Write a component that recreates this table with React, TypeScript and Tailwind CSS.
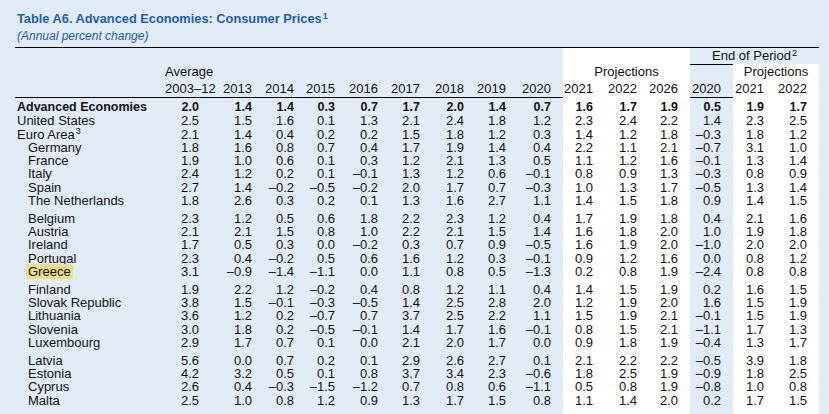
import React from "react";

const GRID =
  "grid grid-cols-[150px_57px_42px_42px_41px_43px_42px_44px_42px_45px_42px_44px_41px_43px_43px_43px]";

const WHITE = new Set([9, 10, 11, 13, 14]);

type Row = {
  name: string;
  sup?: string;
  v: string[];
  bold?: boolean;
  indent?: boolean;
  top?: "first" | "group";
  hl?: boolean;
};

const d = (s: string) => s.split(" ").map((x) => x.replace("-", "\u2013"));

const rows: Row[] = [
  { name: "Advanced Economies", bold: true, top: "first", v: d("2.0 1.4 1.4 0.3 0.7 1.7 2.0 1.4 0.7 1.6 1.7 1.9 0.5 1.9 1.7") },
  { name: "United States", v: d("2.5 1.5 1.6 0.1 1.3 2.1 2.4 1.8 1.2 2.3 2.4 2.2 1.4 2.3 2.5") },
  { name: "Euro Area", sup: "3", v: d("2.1 1.4 0.4 0.2 0.2 1.5 1.8 1.2 0.3 1.4 1.2 1.8 -0.3 1.8 1.2") },
  { name: "Germany", indent: true, v: d("1.8 1.6 0.8 0.7 0.4 1.7 1.9 1.4 0.4 2.2 1.1 2.1 -0.7 3.1 1.0") },
  { name: "France", indent: true, v: d("1.9 1.0 0.6 0.1 0.3 1.2 2.1 1.3 0.5 1.1 1.2 1.6 -0.1 1.3 1.4") },
  { name: "Italy", indent: true, v: d("2.4 1.2 0.2 0.1 -0.1 1.3 1.2 0.6 -0.1 0.8 0.9 1.3 -0.3 0.8 0.9") },
  { name: "Spain", indent: true, v: d("2.7 1.4 -0.2 -0.5 -0.2 2.0 1.7 0.7 -0.3 1.0 1.3 1.7 -0.5 1.3 1.4") },
  { name: "The Netherlands", indent: true, v: d("1.8 2.6 0.3 0.2 0.1 1.3 1.6 2.7 1.1 1.4 1.5 1.8 0.9 1.4 1.5") },
  { name: "Belgium", indent: true, top: "group", v: d("2.3 1.2 0.5 0.6 1.8 2.2 2.3 1.2 0.4 1.7 1.9 1.8 0.4 2.1 1.6") },
  { name: "Austria", indent: true, v: d("2.1 2.1 1.5 0.8 1.0 2.2 2.1 1.5 1.4 1.6 1.8 2.0 1.0 1.9 1.8") },
  { name: "Ireland", indent: true, v: d("1.7 0.5 0.3 0.0 -0.2 0.3 0.7 0.9 -0.5 1.6 1.9 2.0 -1.0 2.0 2.0") },
  { name: "Portugal", indent: true, v: d("2.3 0.4 -0.2 0.5 0.6 1.6 1.2 0.3 -0.1 0.9 1.2 1.6 0.0 0.8 1.2") },
  { name: "Greece", indent: true, hl: true, v: d("3.1 -0.9 -1.4 -1.1 0.0 1.1 0.8 0.5 -1.3 0.2 0.8 1.9 -2.4 0.8 0.8") },
  { name: "Finland", indent: true, top: "group", v: d("1.9 2.2 1.2 -0.2 0.4 0.8 1.2 1.1 0.4 1.4 1.5 1.9 0.2 1.6 1.5") },
  { name: "Slovak Republic", indent: true, v: d("3.8 1.5 -0.1 -0.3 -0.5 1.4 2.5 2.8 2.0 1.2 1.9 2.0 1.6 1.5 1.9") },
  { name: "Lithuania", indent: true, v: d("3.6 1.2 0.2 -0.7 0.7 3.7 2.5 2.2 1.1 1.5 1.9 2.1 -0.1 1.5 1.9") },
  { name: "Slovenia", indent: true, v: d("3.0 1.8 0.2 -0.5 -0.1 1.4 1.7 1.6 -0.1 0.8 1.5 2.1 -1.1 1.7 1.3") },
  { name: "Luxembourg", indent: true, v: d("2.9 1.7 0.7 0.1 0.0 2.1 2.0 1.7 0.0 0.9 1.8 1.9 -0.4 1.3 1.7") },
  { name: "Latvia", indent: true, top: "group", v: d("5.6 0.0 0.7 0.2 0.1 2.9 2.6 2.7 0.1 2.1 2.2 2.2 -0.5 3.9 1.8") },
  { name: "Estonia", indent: true, v: d("4.2 3.2 0.5 0.1 0.8 3.7 3.4 2.3 -0.6 1.8 2.5 1.9 -0.9 1.8 2.5") },
  { name: "Cyprus", indent: true, v: d("2.6 0.4 -0.3 -1.5 -1.2 0.7 0.8 0.6 -1.1 0.5 0.8 1.9 -0.8 1.0 0.8") },
  { name: "Malta", indent: true, v: d("2.5 1.0 0.8 1.2 0.9 1.3 1.7 1.5 0.8 1.1 1.4 2.0 0.2 1.7 1.5") },
];

const years = ["2013", "2014", "2015", "2016", "2017", "2018", "2019", "2020", "2021", "2022", "2026", "2020", "2021", "2022"];

function DataRow({ r }: { r: Row }) {
  const padTop = r.top === "first" ? "pt-[3px]" : r.top === "group" ? "pt-[4.8px]" : "";
  return (
    <div className={`${GRID} ${r.bold ? "font-bold text-[12.5px]" : "text-[13px]"}`}>
      <div className={`${padTop} ${r.indent ? "pl-[13px]" : "pl-[2px]"} whitespace-nowrap`}>
        {r.hl ? (
          <span className="bg-[#ebde8c] rounded-[3px] px-[2px] -mx-[2px]">{r.name}</span>
        ) : (
          r.name
        )}
        {r.sup && <sup className="text-[9px] ml-[1px]">{r.sup}</sup>}
      </div>
      {r.v.map((x, i) => (
        <div
          key={i}
          className={`${padTop} text-right ${i === 0 ? "pr-[23px]" : "pr-[12px]"} ${WHITE.has(i) ? "bg-white" : ""}`}
        >
          {x}
        </div>
      ))}
    </div>
  );
}

export default function App() {
  return (
    <div
      className="w-[829px] h-[414px] overflow-hidden bg-[#e2ecf6] text-[#111] flex flex-col pl-[15px]"
      style={{ fontFamily: "'Liberation Sans Narrow', 'Arial Narrow', 'Liberation Sans', sans-serif" }}
    >
      <div className="pt-[11px] pl-[2px]">
        <div className="h-[16px] text-[12.8px] leading-[16px] font-bold text-[#1f5ea6] whitespace-nowrap">
          Table A6. Advanced Economies: Consumer Prices
          <sup className="text-[9px] ml-[1px]">1</sup>
        </div>
        <div className="h-[15px] mt-[2px] text-[12px] leading-[15px] italic text-[#1f5ea6]">(Annual percent change)</div>
      </div>
      <div className="mt-[3px] w-[804px] flex-1 flex flex-col text-[13px] leading-[13.25px] border-t border-black">
        {/* Header row A */}
        <div className={`${GRID} h-[16px]`}>
          <div className="col-span-10" />
          <div className="bg-white" />
          <div className="bg-white" />
          <div className="bg-white" />
          <div className="col-span-3 border-b border-black text-center leading-[16px] whitespace-nowrap">
            End of Period<sup className="text-[9px] ml-[1px]">2</sup>
          </div>
        </div>
        {/* Header row B */}
        <div className={`${GRID} h-[15px] leading-[15px]`}>
          <div />
          <div className="pr-[12px] text-center">Average</div>
          <div className="col-span-8" />
          <div className="col-span-3 bg-white border-b border-black text-center">Projections</div>
          <div />
          <div className="col-span-2 bg-white border-b border-black text-center">Projections</div>
        </div>
        {/* Header row C */}
        <div className={`${GRID} h-[19px] leading-[19px] border-b border-black`}>
          <div />
          <div className="pr-[12px] text-center whitespace-nowrap">2003–12</div>
          {years.map((y, i) => (
            <div key={i} className={`text-right pr-[12px] ${WHITE.has(i + 1) ? "bg-white" : ""}`}>
              {y}
            </div>
          ))}
        </div>
        {rows.map((r, i) => (
          <DataRow key={i} r={r} />
        ))}
        <div className={`${GRID} flex-1`}>
          <div className="col-span-10" />
          <div className="bg-white" />
          <div className="bg-white" />
          <div className="bg-white" />
          <div />
          <div className="bg-white" />
          <div className="bg-white" />
        </div>
      </div>
    </div>
  );
}
